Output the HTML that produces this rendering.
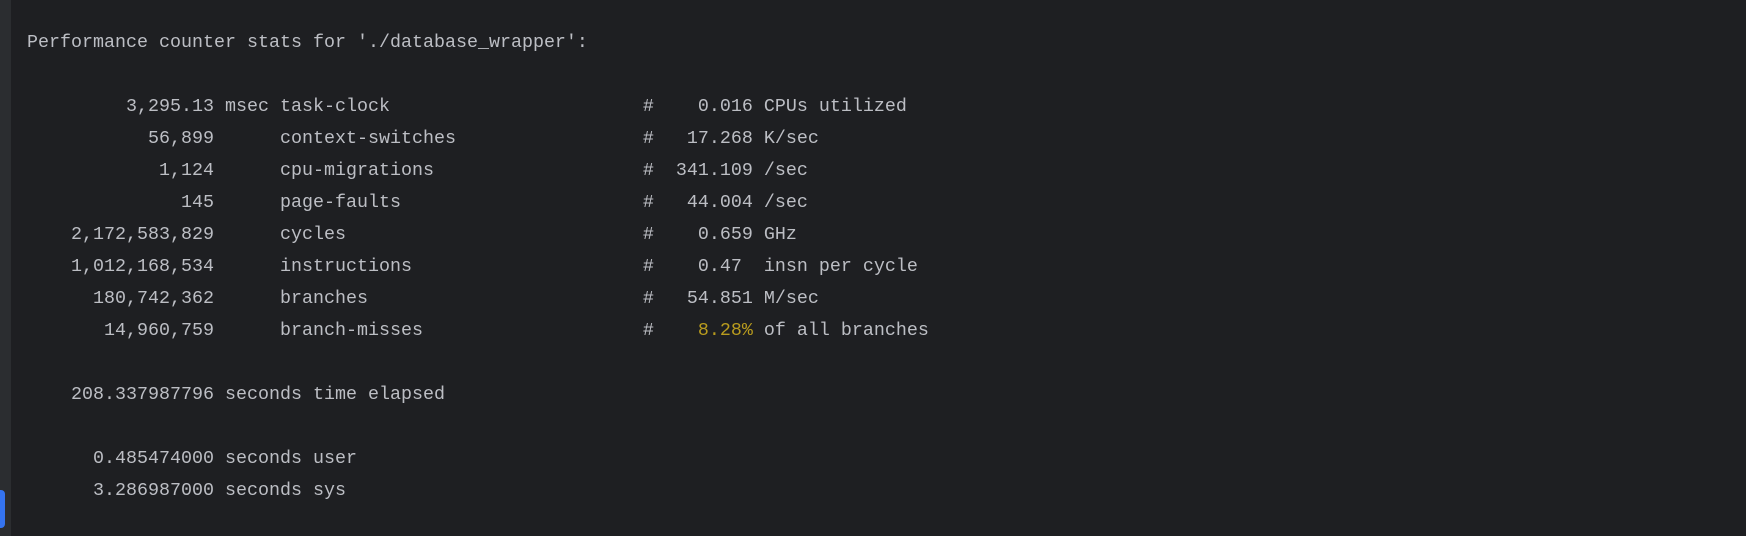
<!DOCTYPE html>
<html><head><meta charset="utf-8"><style>
html,body{margin:0;padding:0;width:1746px;height:536px;overflow:hidden;background:#1e1f22;}
.side{position:absolute;left:0;top:0;width:11px;height:536px;background:#2b2d30;}
.blue{position:absolute;left:0;top:490px;width:5px;height:38px;background:#3574f0;border-radius:0 4px 4px 0;}
pre{position:absolute;left:27px;top:27px;margin:0;font-family:"Liberation Mono",monospace;font-size:18.33px;line-height:32px;color:#bcbec4;}
.y{color:#b89b1e;}
</style></head><body>
<div class="side"></div><div class="blue"></div>
<pre>Performance counter stats for './database_wrapper':

         3,295.13 msec task-clock                       #    0.016 CPUs utilized
           56,899      context-switches                 #   17.268 K/sec
            1,124      cpu-migrations                   #  341.109 /sec
              145      page-faults                      #   44.004 /sec
    2,172,583,829      cycles                           #    0.659 GHz
    1,012,168,534      instructions                     #    0.47  insn per cycle
      180,742,362      branches                         #   54.851 M/sec
       14,960,759      branch-misses                    #    <span class="y">8.28%</span> of all branches

    208.337987796 seconds time elapsed

      0.485474000 seconds user
      3.286987000 seconds sys
</pre>
</body></html>
